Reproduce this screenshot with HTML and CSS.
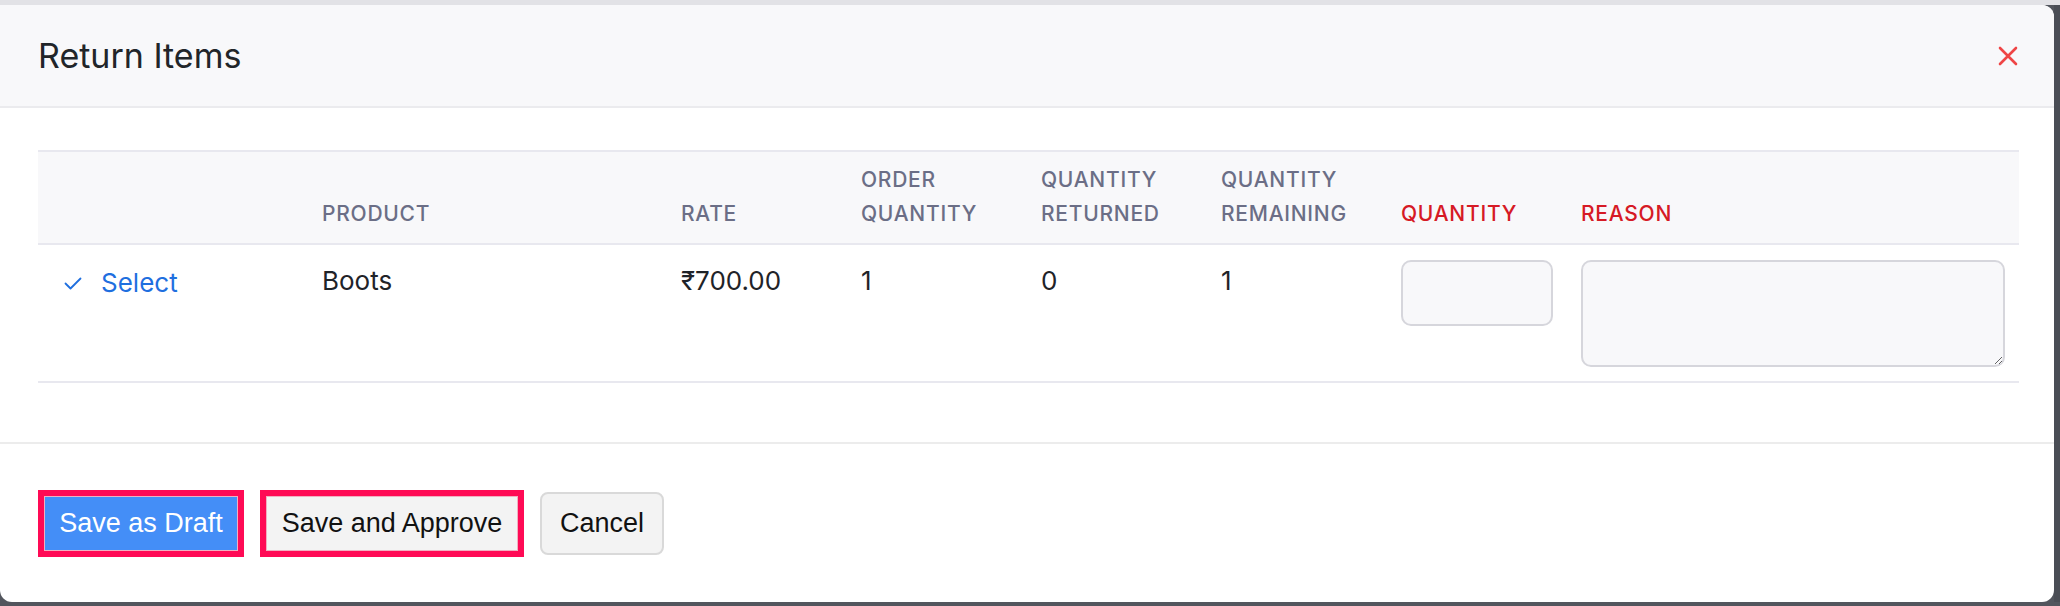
FILE: index.html
```html
<!DOCTYPE html>
<html lang="en">
<head>
<meta charset="utf-8">
<title>Return Items</title>
<link rel="stylesheet" href="styles.css">
</head>
<body>
<div class="topstrip"></div>
<div class="stage">
  <div class="modal">
    <header class="modal-header">
      <h1 class="modal-title">Return Items</h1>
      <button class="close" aria-label="Close">
        <svg width="20" height="20" viewBox="0 0 20 20"><path d="M2 2L18 18M18 2L2 18" stroke="#ef4545" stroke-width="2.6" stroke-linecap="round"/></svg>
      </button>
    </header>
    <div class="modal-body">
      <table class="items">
        <colgroup>
          <col class="c-select"><col class="c-product"><col class="c-std"><col class="c-std"><col class="c-std"><col class="c-std"><col class="c-std"><col class="c-reason">
        </colgroup>
        <thead>
          <tr>
            <th></th>
            <th>Product</th>
            <th>Rate</th>
            <th>Order<br>Quantity</th>
            <th>Quantity<br>Returned</th>
            <th>Quantity<br>Remaining</th>
            <th class="req">Quantity</th>
            <th class="req">Reason</th>
          </tr>
        </thead>
        <tbody>
          <tr>
            <td><a class="select-link" href="#"><svg class="check" width="18" height="13" viewBox="0 0 18 13"><path d="M1.5 6.5L6.5 11.5L16.5 1.5" fill="none" stroke="#1f6fdf" stroke-width="1.8" stroke-linecap="round" stroke-linejoin="round"/></svg>Select</a></td>
            <td>Boots</td>
            <td>₹700.00</td>
            <td>1</td>
            <td>0</td>
            <td>1</td>
            <td><input class="qty" type="text"></td>
            <td><textarea class="reason"></textarea></td>
          </tr>
        </tbody>
      </table>
    </div>
    <footer class="modal-footer">
      <button class="btn btn-primary hl">Save as Draft</button>
      <button class="btn btn-light hl">Save and Approve</button>
      <button class="btn btn-light btn-cancel">Cancel</button>
    </footer>
  </div>
  <div class="backdrop-edge"></div>
</div>
<div class="bottomstrip"></div>
</body>
</html>
```

FILE: styles.css
```css
* { box-sizing: border-box; }
html, body { margin: 0; padding: 0; }
body {
  width: 2060px;
  height: 606px;
  background: #52555d;
  font-family: Inter, "Noto Sans", sans-serif;
  color: #1f2328;
  overflow: hidden;
  display: flex;
  flex-direction: column;
}
.topstrip { height: 5px; background: #e2e2e6; flex: none; }
.stage { display: flex; flex: 1; min-height: 0; }
.backdrop-edge { width: 6px; background: #4a4d55; flex: none; }
.bottomstrip { height: 4px; background: #52555d; flex: none; }
.modal {
  flex: 1;
  background: #fff;
  border-radius: 0 12px 12px 12px;
  overflow: hidden;
  display: flex;
  flex-direction: column;
}
.modal-header {
  height: 103px;
  background: #f8f8fa;
  border-bottom: 2px solid #ebebee;
  display: flex;
  align-items: center;
  justify-content: space-between;
  padding: 0 36px 0 38px;
  flex: none;
}
.modal-title {
  margin: 0;
  font-size: 34px;
  font-weight: 400;
  color: #212529;
  letter-spacing: 0;
}
.close {
  border: 0;
  background: none;
  padding: 0;
  width: 20px;
  height: 20px;
  display: flex;
  cursor: pointer;
}
.modal-body { padding: 42px 35px 59px 38px; flex: none; }
.items {
  width: 100%;
  border-collapse: collapse;
  table-layout: fixed;
}
.c-select { width: 258px; }
.c-product { width: 359px; }
.c-std { width: 180px; }
.items thead tr {
  background: #f8f8fa;
  border-top: 2px solid #e8e8ef;
  border-bottom: 2px solid #e8e8ef;
}
.items th {
  text-align: left;
  vertical-align: bottom;
  font-size: 21px;
  font-weight: 500;
  letter-spacing: 0.035em;
  text-transform: uppercase;
  color: #6b6e86;
  line-height: 34px;
  padding: 9px 0 12px 26px;
  height: 93px;
}
.items th.req { color: #d61a25; }
.items tbody tr { border-bottom: 2px solid #e8e8ef; }
.items td {
  vertical-align: top;
  font-size: 26px;
  line-height: 42px;
  padding: 15px 0 14px 26px;
  color: #1f2328;
}
.items td:last-child { padding-right: 14px; }
.select-link {
  color: #1f6fdf;
  text-decoration: none;
  display: inline-flex;
  align-items: center;
  gap: 19px;
}
.check { flex: none; margin-top: 2px; }
.qty, .reason {
  display: block;
  background: #f8f8fa;
  border: 2px solid #d6d6dc;
  border-radius: 10px;
  font-family: inherit;
  font-size: 22px;
  margin: 0;
}
.qty { width: 152px; height: 66px; }
.reason { width: 100%; height: 107px; resize: both; }
.modal-footer {
  flex: 1;
  border-top: 2px solid #ececec;
  display: flex;
  align-items: center;
  gap: 16px;
  padding: 0 38px 0 38px;
}
.btn {
  font-family: "Liberation Sans", Arial, sans-serif;
  font-size: 27px;
  white-space: nowrap;
  border-radius: 8px;
  cursor: pointer;
  height: 63px;
  padding: 0 16px;
}
.btn-primary {
  background: #448ef7;
  color: #fff;
  border: 0;
}
.btn-light {
  background: #f3f3f3;
  color: #111;
  border: 2px solid #d9d9d9;
}
.btn-cancel { padding: 0 18px; }
.hl {
  border: 6px solid #ff0a55;
  border-radius: 0;
  height: 67px;
  padding: 0;
  box-shadow: inset 0 0 0 1px #f0b0c0;
}
.btn-primary.hl { width: 206px; }
.btn-light.hl { width: 264px; }
```
